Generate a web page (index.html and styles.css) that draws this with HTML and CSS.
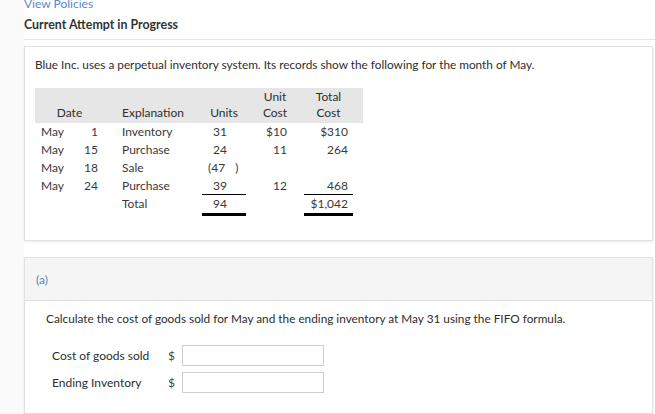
FILE: index.html
```html
<!DOCTYPE html>
<html>
<head>
<meta charset="utf-8">
<link rel="stylesheet" href="styles.css">
</head>
<body>
<div class="page">
  <div class="top">
    <a class="policies" href="#">View Policies</a>
    <div class="attempt">Current Attempt in Progress</div>
  </div>
  <div class="rule"></div>
  <div class="card">
    <p class="intro">Blue Inc. uses a perpetual inventory system. Its records show the following for the month of May.</p>
    <table class="inv">
      <colgroup>
        <col class="c1"><col class="c2"><col class="c3"><col class="c4"><col class="c5"><col class="c6"><col class="c7">
      </colgroup>
      <thead>
        <tr>
          <th colspan="2" class="hc">Date</th>
          <th class="hl">Explanation</th>
          <th class="hc">Units</th>
          <th class="hc">Unit<br>Cost</th>
          <th class="hc">Total<br>Cost</th>
          <th></th>
        </tr>
      </thead>
      <tbody>
        <tr><td class="mon">May</td><td class="day">1</td><td class="exp">Inventory</td><td class="un">31</td><td class="uc">$10</td><td class="tc">$310</td><td></td></tr>
        <tr><td class="mon">May</td><td class="day">15</td><td class="exp">Purchase</td><td class="un">24</td><td class="uc">11</td><td class="tc">264</td><td></td></tr>
        <tr><td class="mon">May</td><td class="day">18</td><td class="exp">Sale</td><td class="un"><span class="neg">(47<span class="paren">)</span></span></td><td class="uc"></td><td class="tc"></td><td></td></tr>
        <tr><td class="mon">May</td><td class="day">24</td><td class="exp">Purchase</td><td class="un thin">39</td><td class="uc">12</td><td class="tc thin">468</td><td></td></tr>
        <tr class="total"><td></td><td></td><td class="exp">Total</td><td class="un thick">94</td><td class="uc"></td><td class="tc thick">$1,042</td><td></td></tr>
      </tbody>
    </table>
  </div>
  <div class="card part">
    <div class="part-head">(a)</div>
    <div class="part-body">
      <p class="q">Calculate the cost of goods sold for May and the ending inventory at May 31 using the FIFO formula.</p>
      <div class="form">
        <div class="frow"><span class="lbl">Cost of goods sold</span><span class="cur">$</span><input class="inp" type="text"></div>
        <div class="frow"><span class="lbl">Ending Inventory</span><span class="cur">$</span><input class="inp" type="text"></div>
      </div>
    </div>
  </div>
</div>
</body>
</html>
```

FILE: styles.css
```css
html, body {
  margin: 0;
  padding: 0;
}
body {
  background: #fafafa;
  font-family: Lato, "Open Sans", sans-serif;
  font-size: 12px;
  color: #2e2e2e;
  overflow: hidden;
}
.page {
  margin-left: 24px;
  background: #fff;
  min-height: 414px;
}
.top {
  margin-top: -3px;
}
.policies {
  display: block;
  color: #5d86c4;
  text-decoration: none;
  font-size: 12px;
  line-height: 14px;
}
.attempt {
  font-weight: bold;
  font-size: 12.4px;
  line-height: 16px;
  margin-top: 6px;
  color: #333;
}
.rule {
  height: 1px;
  background: #e6e6e6;
  margin-top: 6px;
}
.card {
  margin-top: 6px;
  margin-right: 2px;
  border: 1px solid #e0e0e0;
  box-shadow: 0 1px 2px rgba(0,0,0,0.08);
  padding: 11px 10px 24px 10px;
  background: #fff;
}
.intro {
  margin: 0;
  line-height: 14px;
  font-size: 11.8px;
}
.inv {
  margin-top: 16px;
  border-collapse: separate;
  border-spacing: 0;
  table-layout: fixed;
  width: 328px;
  color: #3a3a3a;
}
.c1 { width: 37px; }
.c2 { width: 32px; }
.c3 { width: 98px; }
.c4 { width: 44px; }
.c5 { width: 58px; }
.c6 { width: 49px; }
.c7 { width: 10px; }
.inv thead tr {
  background: #e6e6e6;
}
.inv th {
  font-weight: normal;
  vertical-align: bottom;
  line-height: 16px;
  height: 35px;
  padding: 0 0 2px 0;
  color: #2e2e2e;
  box-sizing: border-box;
}
.hc { text-align: center; }
.hl { text-align: left; padding-left: 18px !important; }
.inv td {
  height: 18px;
  line-height: 18px;
  padding: 0;
  white-space: nowrap;
  vertical-align: top;
}
.inv tr.total td {
  height: 21px;
}
.mon { padding-left: 6px !important; }
.day { text-align: right; padding-right: 6px !important; }
.exp { padding-left: 18px !important; }
.un { padding-left: 11px !important; }
.uc { text-align: right; padding-right: 17px !important; }
.tc { text-align: right; padding-right: 5px !important; }
.neg { margin-left: -5px; }
.paren { margin-left: 10px; }
.thin { box-shadow: inset 0 -1px 0 #000; }
.thick { box-shadow: inset 0 -3px 0 #000; }
.part {
  margin-top: 16px;
  padding: 0;
}
.part-head {
  background: #f5f5f5;
  border-bottom: 1px solid #e0e0e0;
  height: 40px;
  line-height: 40px;
  padding-top: 2px;
  padding-left: 11px;
  color: #5d7fb5;
  font-size: 12px;
}
.part-body {
  padding: 11px 21px 20px 21px;
}
.q {
  margin: 0;
  line-height: 14px;
  font-size: 11.8px;
}
.form {
  margin-top: 19px;
  padding-left: 6px;
  display: flex;
  flex-direction: column;
  gap: 6px;
}
.frow {
  display: flex;
  align-items: center;
  height: 21px;
}
.lbl {
  width: 116px;
}
.cur {
  width: 14px;
  color: #444;
}
.inp {
  box-sizing: border-box;
  width: 142px;
  height: 21px;
  border: 1px solid #cfcfcf;
  margin: 0;
  padding: 0;
  background: #fff;
}
```
